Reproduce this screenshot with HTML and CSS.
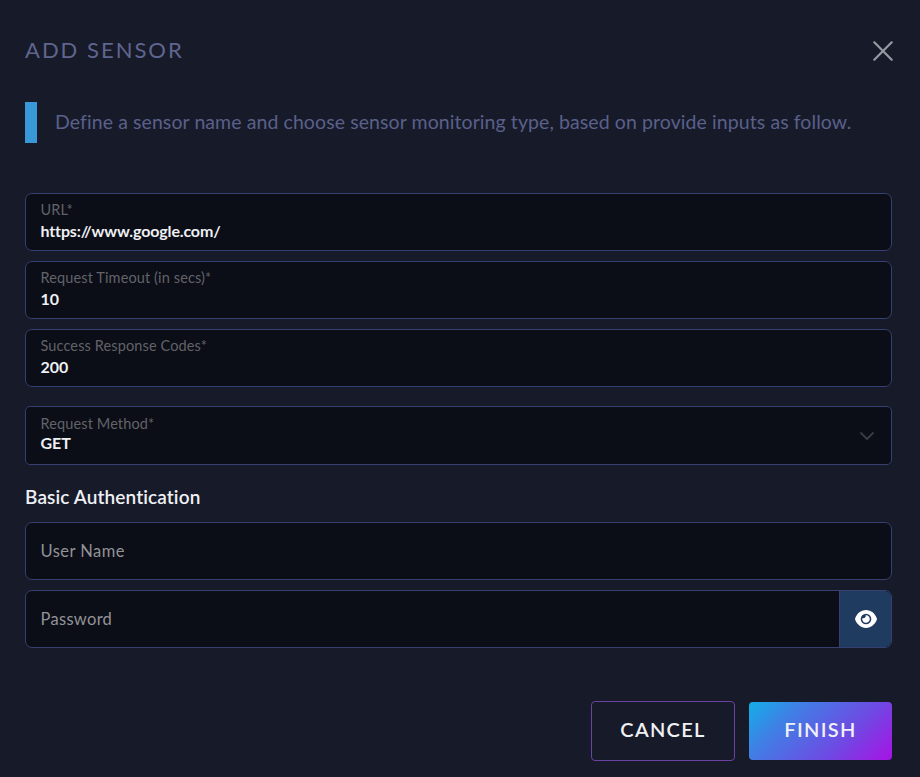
FILE: index.html
```html
<!DOCTYPE html>
<html lang="en">
<head>
<meta charset="utf-8">
<title>Add Sensor</title>
<link rel="stylesheet" href="styles.css">
</head>
<body>
<main class="dialog">
  <header class="header">
    <h1 class="title">ADD SENSOR</h1>
    <button class="close" aria-label="Close"><svg width="20" height="20" viewBox="0 0 20 20"><path d="M1.3 1.3 18.7 18.7M18.7 1.3 1.3 18.7"/></svg></button>
  </header>
  <p class="intro"><span class="intro-text">Define a sensor name and choose sensor monitoring type, based on provide inputs as follow.</span></p>
  <form class="form">
    <div class="field"><span class="label label-url">URL*</span><span class="value value-url">https://www.google.com/</span></div>
    <div class="field"><span class="label label-timeout">Request Timeout (in secs)*</span><span class="value">10</span></div>
    <div class="field"><span class="label label-codes">Success Response Codes*</span><span class="value">200</span></div>
    <div class="field select"><div class="stack"><span class="label label-method">Request Method*</span><span class="value value-get">GET</span></div><svg class="chevron" width="14" height="8" viewBox="0 0 14 8"><path d="M1 1 7 7 13 1"/></svg></div>
    <h2 class="section">Basic Authentication</h2>
    <div class="field empty"><span class="placeholder user">User Name</span></div>
    <div class="field empty password"><span class="placeholder pass">Password</span><span class="reveal"><svg width="22" height="18" viewBox="0 0 22 18"><path fill="#fff" d="M11 0C5.800 0 2 3.600 .2 8.200a2 2 0 0 0 0 1.600C2 14.400 5.800 18 11 18s9-3.600 10.800-8.200a2 2 0 0 0 0-1.600C20 3.600 16.200 0 11 0Z"/><circle cx="11" cy="9" r="5.300" fill="#203b60"/><path fill="#fff" d="M11 5.200a3.800 3.800 0 1 1-3.650 2.750c2 .95 3.950-.75 3.250-2.750Z"/></svg></span></div>
  </form>
  <footer class="actions">
    <button class="button cancel">CANCEL</button>
    <button class="button finish">FINISH</button>
  </footer>
</main>
</body>
</html>
```
FILE: styles.css
```css
* { box-sizing: border-box; }
body {
  margin: 0;
  background: #171a29;
  font-family: Lato, "Liberation Sans", sans-serif;
}
.dialog { height: 777px; padding: 34px 28px 0 25px; overflow: hidden; }
.header { display: flex; justify-content: space-between; align-items: center; height: 33px; }
.title { margin: 0; padding-bottom: 2px; font-size: 22px; font-weight: 400; letter-spacing: 2px; color: #5f658f; white-space: nowrap; }
.close { width: 20px; height: 20px; margin-right: -1px; padding: 0; border: 0; background: none; }
.close svg, .chevron, .reveal svg { display: block; fill: none; }
.close path { stroke: #989aa2; stroke-width: 2.200; stroke-linecap: round; }
.intro {
  display: flex; align-items: center; height: 41px; margin: 35px 0 50px;
  padding-left: 18px; padding-bottom: 2px; border-left: 12px solid #3898d8;
  color: #5a608a; font-size: 19.500px; letter-spacing: .083px; white-space: nowrap;
}
.form { display: flex; flex-direction: column; gap: 10px; }
.field {
  display: flex; flex-direction: column; height: 58px; padding: 6px 14.500px;
  border: 1px solid #354070; border-radius: 7px; background: #0b0d17;
}
.label { color: #626368; font-size: 14.500px; letter-spacing: .12px; line-height: 20px; white-space: nowrap; }
.value { margin-top: 0; color: #eef0f3; font-size: 16px; font-weight: 700; line-height: 21px; }
.value-url { letter-spacing: -.14px; }
.select { flex-direction: row; justify-content: space-between; align-items: center; margin-top: 9px; padding: 0 17px 0 14.500px; border-radius: 5px; height: 59px; }
.stack { display: flex; flex-direction: column; margin-top: -5px; }
.stack .value { margin-top: -2px; }
.chevron path { stroke: #393c43; stroke-width: 1.800; stroke-linecap: round; stroke-linejoin: round; }
.section { margin: 10px 0 3px; color: #eef0f4; font-size: 19px; font-weight: 600; letter-spacing: .12px; line-height: 24px; white-space: nowrap; }
.empty { flex-direction: row; align-items: center; padding: 0 0 0 14.500px; }
.placeholder { color: #929396; font-size: 16.500px; letter-spacing: .3px; }
.user { letter-spacing: .45px; }
.password { justify-content: space-between; overflow: hidden; }
.reveal { display: flex; align-items: center; justify-content: center; width: 52px; height: 100%; border-left: 1px solid #354070; background: #203b60; }
.actions { display: flex; justify-content: flex-end; align-items: center; gap: 14px; margin-top: 53px; }
.button { padding: 0 0 4px; border: 0; border-radius: 4px; color: #f0f1f5; font-family: inherit; font-size: 20px; font-weight: 600; letter-spacing: 1.300px; }
.cancel { width: 144px; height: 60px; border: 1px solid #6d41a3; background: transparent; }
.finish { width: 143px; height: 58px; background: linear-gradient(135deg, #12afe8 0%, #3f80e5 26%, #7048e3 67%, #a812e4 100%); }
```
